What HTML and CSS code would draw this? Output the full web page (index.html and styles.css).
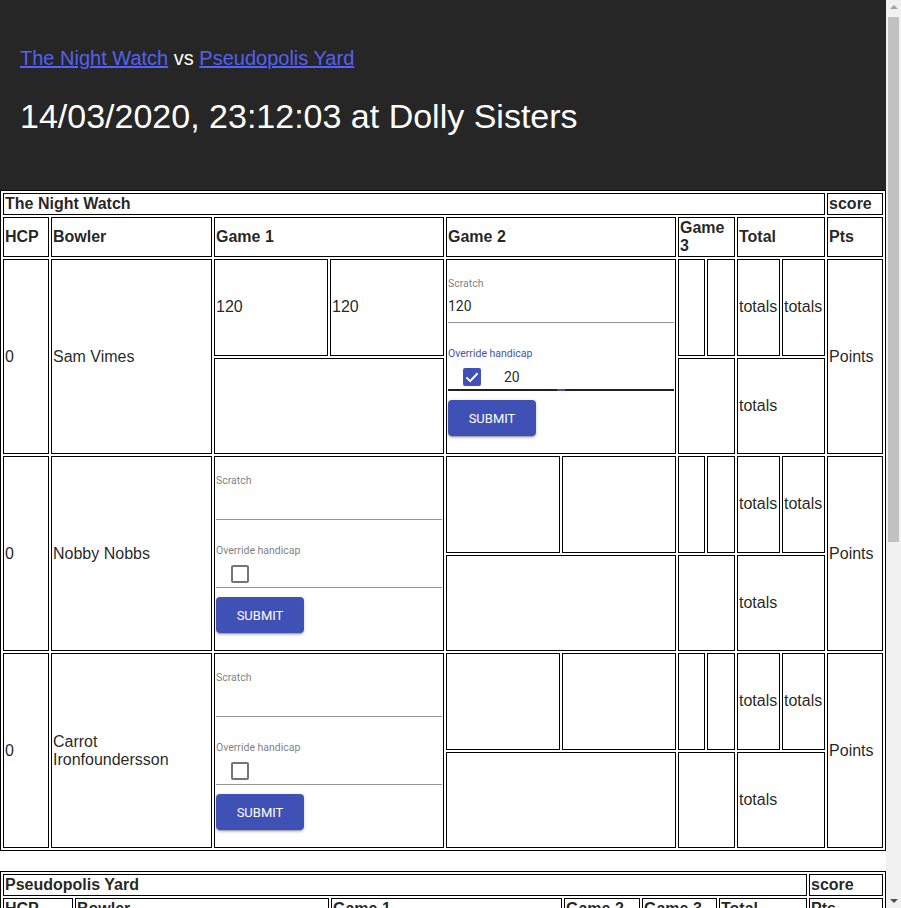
FILE: index.html
```html
<!DOCTYPE html>
<html lang="en">
<head>
<meta charset="UTF-8">
<title>The Night Watch vs Pseudopolis Yard</title>
<link rel="stylesheet" href="styles.css">
</head>
<body>
<header class="match-header">
    <div class="teams"><a href="#night-watch">The Night Watch</a> vs <a href="#pseudopolis">Pseudopolis Yard</a></div>
    <h1 class="when">14/03/2020, 23:12:03 at Dolly Sisters</h1>
</header>

<!-- équipe 1 -->
<table class="team" id="night-watch">
    <colgroup>
        <col class="w-hcp"><col class="w-bowler">
        <col class="w-game"><col class="w-game">
        <col class="w-game"><col class="w-game">
        <col class="w-g3a"><col class="w-g3b">
        <col class="w-tot"><col class="w-tot">
        <col class="w-pts">
    </colgroup>
    <tr><th colspan="10">The Night Watch</th><th>score</th></tr>
    <tr>
        <th>HCP</th><th>Bowler</th>
        <th colspan="2">Game 1</th><th colspan="2">Game 2</th><th colspan="2">Game 3</th>
        <th colspan="2">Total</th><th>Pts</th>
    </tr>

    <tr>
        <td rowspan="2">0</td>
        <td rowspan="2">Sam Vimes</td>
        <td>120</td><td>120</td>
        <td rowspan="2" colspan="2" class="form-cell">
            <div class="score-form">
                <div class="field">
                    <label>Scratch</label>
                    <div class="value">120</div>
                </div>
                <div class="field field-hcp focused">
                    <label>Override handicap</label>
                    <div class="check-row">
                        <span class="checkbox checked">
                            <svg viewBox="0 0 24 24" width="18" height="18"><path d="M4.5 12.5l5 5L19.5 7" fill="none" stroke="#fff" stroke-width="2.6"/></svg>
                        </span>
                        <span class="hcp-value">20</span>
                    </div>
                </div>
                <button class="submit">SUBMIT</button>
            </div>
        </td>
        <td></td><td></td>
        <td>totals</td><td>totals</td>
        <td rowspan="2">Points</td>
    </tr>
    <tr>
        <td colspan="2"></td>
        <td colspan="2"></td>
        <td colspan="2">totals</td>
    </tr>

    <tr>
        <td rowspan="2">0</td>
        <td rowspan="2">Nobby Nobbs</td>
        <td rowspan="2" colspan="2" class="form-cell">
            <div class="score-form">
                <div class="field">
                    <label>Scratch</label>
                    <div class="value"></div>
                </div>
                <div class="field field-hcp">
                    <label>Override handicap</label>
                    <div class="check-row"><span class="checkbox"></span></div>
                </div>
                <button class="submit">SUBMIT</button>
            </div>
        </td>
        <td></td><td></td>
        <td></td><td></td>
        <td>totals</td><td>totals</td>
        <td rowspan="2">Points</td>
    </tr>
    <tr>
        <td colspan="2"></td>
        <td colspan="2"></td>
        <td colspan="2">totals</td>
    </tr>

    <tr>
        <td rowspan="2">0</td>
        <td rowspan="2">Carrot Ironfoundersson</td>
        <td rowspan="2" colspan="2" class="form-cell">
            <div class="score-form">
                <div class="field">
                    <label>Scratch</label>
                    <div class="value"></div>
                </div>
                <div class="field field-hcp">
                    <label>Override handicap</label>
                    <div class="check-row"><span class="checkbox"></span></div>
                </div>
                <button class="submit">SUBMIT</button>
            </div>
        </td>
        <td></td><td></td>
        <td></td><td></td>
        <td>totals</td><td>totals</td>
        <td rowspan="2">Points</td>
    </tr>
    <tr>
        <td colspan="2"></td>
        <td colspan="2"></td>
        <td colspan="2">totals</td>
    </tr>
</table>

<!-- équipe 2 -->
<table class="team team-2" id="pseudopolis">
    <colgroup>
        <col class="w2-hcp"><col class="w2-bowler"><col class="w2-g1">
        <col class="w2-g2"><col class="w2-g3"><col class="w2-tot"><col class="w2-pts">
    </colgroup>
    <tr><th colspan="6">Pseudopolis Yard</th><th>score</th></tr>
    <tr>
        <th>HCP</th><th>Bowler</th><th>Game 1</th><th>Game 2</th><th>Game 3</th><th>Total</th><th>Pts</th>
    </tr>
    <tr class="row2">
        <td>0</td><td>Detritus</td><td></td><td></td><td></td><td>totals</td><td>Points</td>
    </tr>
    <tr class="row2">
        <td>0</td><td>Cheery Littlebottom</td><td></td><td></td><td></td><td>totals</td><td>Points</td>
    </tr>
    <tr class="row2">
        <td>0</td><td>Angua</td><td></td><td></td><td></td><td>totals</td><td>Points</td>
    </tr>
</table>

<!-- barre de défilement (visuelle) -->
<div class="scrollbar">
    <span class="arrow arrow-up"></span>
    <span class="thumb"></span>
    <span class="arrow arrow-down"></span>
</div>
</body>
</html>
```

FILE: styles.css
```css
body {
    margin: 0 15px 0 0;
    background: #fff;
    font-family: "Liberation Sans", Arial, sans-serif;
    color: rgba(0,0,0,0.87);
}

/* bandeau du haut */
.match-header {
    background: #262626;
    color: #fff;
    padding: 47px 20px 54px;
}
.teams {
    font-size: 20px;
    line-height: 23px;
}
.teams a {
    color: #5561f0;
}
.when {
    margin: 27px 0 0;
    font-size: 34px;
    line-height: 39px;
    font-weight: normal;
}

/* tableaux des équipes */
.team {
    width: 100%;
    table-layout: fixed;
    border-collapse: separate;
    border-spacing: 2px;
    border: 1px solid #000;
    font-size: 16px;
    line-height: 18px;
}
.team-2 {
    margin-top: 20px;
}
.team th,
.team td {
    border: 1px solid #000;
    padding: 1px;
    text-align: left;
    vertical-align: middle;
}
.team th {
    font-weight: bold;
}

.w-hcp { width: 46px; }
.w-bowler { width: 161px; }
.w-game { width: 114px; }
.w-g3a { width: 27px; }
.w-g3b { width: 28px; }
.w-tot { width: 43px; }
.w-pts { width: 56px; }

.w2-hcp { width: 70px; }
.w2-bowler { width: 254px; }
.w2-g1 { width: 231px; }
.w2-g2 { width: 76px; }
.w2-g3 { width: 75px; }
.w2-tot { width: 88px; }
.w2-pts { width: 74px; }

.row2 td {
    height: 60px;
}

/* formulaire de saisie */
.score-form {
    font-family: Roboto, "Liberation Sans", sans-serif;
}
.field {
    position: relative;
    border-bottom: 1px solid rgba(0,0,0,0.42);
}
.field label {
    display: block;
    font-size: 10.5px;
    line-height: 12px;
    color: rgba(0,0,0,0.54);
}
.field:first-child {
    height: 61px;
}
.field:first-child label {
    padding-top: 17px;
}
.value {
    margin-top: 8px;
    font-size: 14px;
    line-height: 16px;
    color: rgba(0,0,0,0.87);
}
.field-hcp {
    padding: 25px 0 4px;
}
.field-hcp.focused {
    padding-bottom: 3px;
    border-bottom: 2px solid rgba(0,0,0,0.87);
}
.field-hcp.focused label {
    color: #3f51b5;
}
.field-hcp.focused::after {
    content: "";
    position: absolute;
    left: 109px;
    bottom: -2px;
    width: 8px;
    height: 2px;
    background: #3f51b5;
}
.check-row {
    display: flex;
    align-items: center;
    height: 18px;
    margin-top: 8px;
    padding-left: 15px;
}
.checkbox {
    box-sizing: border-box;
    width: 18px;
    height: 18px;
    border: 2px solid rgba(0,0,0,0.54);
    border-radius: 2px;
}
.checkbox.checked {
    border: none;
    background: #3f51b5;
}
.checkbox svg {
    display: block;
}
.hcp-value {
    margin-left: 23px;
    font-size: 14px;
    color: rgba(0,0,0,0.87);
}
.submit {
    display: block;
    margin: 9px 0 16px;
    min-width: 88px;
    height: 36px;
    padding: 0 16px;
    border: none;
    border-radius: 4px;
    background: #3f51b5;
    color: #fff;
    font-family: Roboto, "Liberation Sans", sans-serif;
    font-size: 13px;
    box-shadow: 0 3px 1px -2px rgba(0,0,0,0.2), 0 2px 2px 0 rgba(0,0,0,0.14), 0 1px 5px 0 rgba(0,0,0,0.12);
}

/* barre de défilement dessinée par-dessus la page */
.scrollbar {
    position: fixed;
    top: 0;
    right: 0;
    width: 15px;
    height: 100%;
    background: #f1f1f1;
    display: flex;
    flex-direction: column;
    align-items: center;
}
.arrow {
    flex: 0 0 15px;
    width: 0;
    height: 0;
    box-sizing: border-box;
}
.arrow-up {
    border-left: 4px solid transparent;
    border-right: 4px solid transparent;
    border-bottom: 4px solid #a3a3a3;
    margin-top: 5px;
    flex-basis: 4px;
    margin-bottom: 6px;
}
.arrow-down {
    border-left: 4px solid transparent;
    border-right: 4px solid transparent;
    border-top: 4px solid #505050;
    margin-top: auto;
    margin-bottom: 5px;
    flex-basis: 4px;
}
.thumb {
    width: 11px;
    height: 525px;
    margin-top: 2px;
    background: #c1c1c1;
}
```
